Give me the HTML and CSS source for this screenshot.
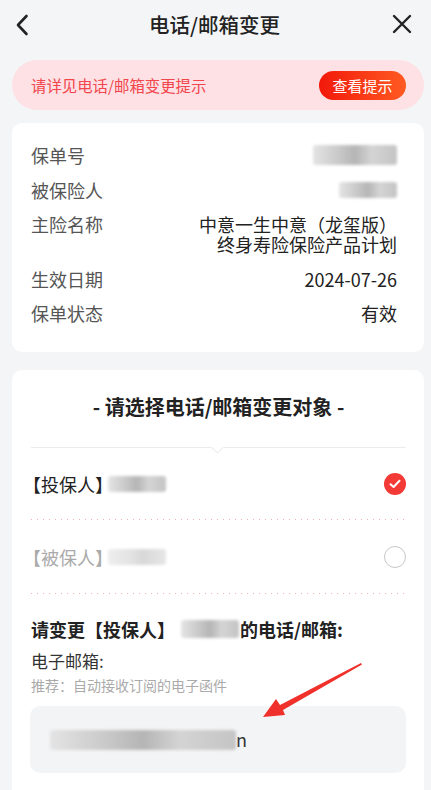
FILE: index.html
```html
<!DOCTYPE html>
<html lang="zh-CN">
<head>
  <meta charset="UTF-8" />
  <title>电话/邮箱变更</title>
  <link rel="stylesheet" href="styles.css">
</head>
<body>

  <header class="topbar">
    <svg class="icon-back" width="14" height="22" viewBox="0 0 14 22">
      <path d="M11.5 2 L3 11 L11.5 20" fill="none" stroke="#222" stroke-width="2.6" stroke-linecap="round" stroke-linejoin="round"/>
    </svg>
    <h1>电话/邮箱变更</h1>
    <svg class="icon-close" width="20" height="20" viewBox="0 0 20 20">
      <path d="M2 2 L18 18 M18 2 L2 18" fill="none" stroke="#222" stroke-width="2.4" stroke-linecap="round"/>
    </svg>
  </header>

  <div class="banner">
    <span>请详见电话/邮箱变更提示</span>
    <button class="btn-tip">查看提示</button>
  </div>

  <section class="card info">
    <div class="row">
      <span class="label">保单号</span>
      <span class="mask mask-policy"></span>
    </div>
    <div class="row">
      <span class="label">被保险人</span>
      <span class="mask mask-insured"></span>
    </div>
    <div class="row">
      <span class="label">主险名称</span>
      <div class="value">
        <div>中意一生中意（龙玺版）</div>
        <div>终身寿险保险产品计划</div>
      </div>
    </div>
    <div class="row">
      <span class="label">生效日期</span>
      <span class="value">2024-07-26</span>
    </div>
    <div class="row">
      <span class="label">保单状态</span>
      <span class="value">有效</span>
    </div>
  </section>

  <section class="card choose">
    <h2>- 请选择电话/邮箱变更对象 -</h2>
    <div class="divider"><i class="notch"></i></div>

    <div class="option">
      <span class="opt-text">【投保人】<span class="mask mask-opt"></span></span>
      <span class="radio checked">
        <svg width="12" height="10" viewBox="0 0 12 10"><path d="M1.5 5.2 L4.6 8 L10.5 1.8" fill="none" stroke="#fff" stroke-width="2" stroke-linecap="round" stroke-linejoin="round"/></svg>
      </span>
    </div>
    <div class="option off">
      <span class="opt-text">【被保人】<span class="mask mask-opt light"></span></span>
      <span class="radio"></span>
    </div>

    <h3>请变更【投保人】<span class="mask mask-name"></span>的电话/邮箱:</h3>
    <div class="field-label">电子邮箱:</div>
    <div class="hint">推荐：自动接收订阅的电子函件</div>
    <div class="input-box">
      <span class="mask mask-email"></span><span class="email-tail">n</span>
    </div>

    <svg class="arrow" width="104" height="62" viewBox="0 0 104 62">
      <polygon points="100,2 101,3.5 22,49 24,54 2,56 15,38 19,44" fill="#f0302a"/>
    </svg>
  </section>

</body>
</html>
```

FILE: styles.css
```css
body {
  margin: 0;
  padding: 0;
  background: #f4f5f7;
  font-family: "Noto Sans CJK SC", "Noto Sans", sans-serif;
  color: #222;
  width: 431px;
  overflow: hidden;
}
.topbar {
  height: 50px;
  display: flex;
  align-items: center;
  justify-content: space-between;
  padding: 0 19px 0 15px;
}
.topbar h1 {
  margin: 0;
  font-size: 20.5px;
  font-weight: 500;
  line-height: 28px;
  margin-top: -2px;
  margin-left: 8px;
}
.icon-back {
  margin-top: -1px;
}
.icon-close {
  margin-top: -2px;
}
.banner {
  margin: 10px 7px 0 12px;
  height: 50px;
  border-radius: 25px;
  background: #fde1e4;
  display: flex;
  align-items: center;
  justify-content: space-between;
  padding: 0 18px 0 19px;
  font-size: 15.4px;
  color: #f2454c;
}
.btn-tip {
  border: none;
  height: 29px;
  width: 87px;
  border-radius: 15px;
  background: linear-gradient(to right, #f2190b, #ff5a21);
  color: #fff;
  font-family: inherit;
  font-size: 15px;
  padding: 0;
}
.card {
  background: #fff;
  border-radius: 10px;
  margin: 13px 7px 0 12px;
  padding: 0 19px;
}
.info {
  padding: 22px 27px 29px 19px;
  display: flex;
  flex-direction: column;
  gap: 14.5px;
}
.row {
  display: flex;
  justify-content: space-between;
  align-items: flex-start;
  font-size: 18px;
  line-height: 20px;
}
.label {
  color: #555;
}
.value {
  color: #222;
  text-align: right;
}
.mask {
  display: inline-block;
  background: linear-gradient(to right, #e4e4e4, #c9c9c9 30%, #b5b5b5 50%, #d4d4d4 70%, #c4c4c4);
  filter: blur(1.5px);
  border-radius: 3px;
}
.mask-policy {
  width: 84px;
  height: 20px;
}
.mask-insured {
  width: 58px;
  height: 16px;
  margin-top: 2px;
}
.choose {
  margin-top: 18px;
  padding: 24px 18px 40px 19px;
  position: relative;
}
.choose h2 {
  margin: 0;
  text-align: center;
  font-size: 20px;
  font-weight: 700;
  line-height: 26px;
}
.divider {
  margin-top: 27px;
  height: 1px;
  background: #ececec;
  position: relative;
}
.notch {
  position: absolute;
  left: 182px;
  top: -4px;
  width: 8px;
  height: 8px;
  background: #fff;
  border-right: 1px solid #ececec;
  border-bottom: 1px solid #ececec;
  transform: rotate(45deg);
}
.option {
  height: 72px;
  display: flex;
  align-items: center;
  justify-content: space-between;
  font-size: 18px;
  background: linear-gradient(to right, #f0b2b2 1.5px, transparent 1.5px) repeat-x left bottom / 6px 1px;
}
.option + .option {
  height: 74px;
}
.opt-text {
  display: flex;
  align-items: center;
  margin-left: -8px;
}
.off {
  color: #aaa;
}
.mask-opt {
  width: 58px;
  height: 16px;
  margin-left: -5px;
}
.mask-opt.light {
  background: linear-gradient(to right, #eee, #e2e2e2 40%, #d8d8d8 60%, #e6e6e6);
}
.radio {
  width: 20px;
  height: 20px;
  border-radius: 50%;
  border: 1.5px solid #c8c8c8;
  display: flex;
  align-items: center;
  justify-content: center;
}
.radio.checked {
  border: none;
  width: 22px;
  height: 22px;
  background: #f43a36;
}
.choose h3 {
  margin: 23px 0 0;
  font-size: 18px;
  font-weight: 700;
  line-height: 24px;
  display: flex;
  align-items: center;
}
.mask-name {
  width: 58px;
  height: 18px;
  margin: 0 1px 0 6px;
}
.field-label {
  margin-top: 9px;
  font-size: 17px;
  line-height: 22px;
  color: #333;
}
.hint {
  margin-top: 4px;
  font-size: 14px;
  line-height: 19px;
  color: #aaa;
}
.input-box {
  margin-top: 11px;
  margin-left: -1px;
  height: 67px;
  border-radius: 10px;
  background: #f3f4f6;
  display: flex;
  align-items: center;
  padding-left: 20px;
  font-size: 18px;
}
.mask-email {
  width: 186px;
  height: 20px;
}
.email-tail {
  color: #333;
  margin-top: -2px;
}
.arrow {
  position: absolute;
  left: 249px;
  top: 291px;
}
```
